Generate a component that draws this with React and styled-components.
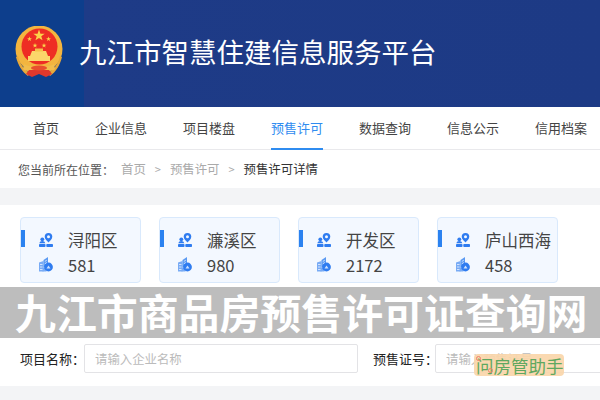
import styled, { createGlobalStyle } from "styled-components";

const GlobalStyle = createGlobalStyle`
  html, body {
    margin: 0;
    padding: 0;
    background: #f3f4f6;
    overflow: hidden;
  }
  * {
    box-sizing: border-box;
  }
`;

const Page = styled.div`
  position: relative;
  width: 600px;
  height: 400px;
  overflow: hidden;
  font-family: "Noto Sans CJK SC", "Noto Sans", sans-serif;
`;

const Header = styled.header`
  height: 107px;
  padding: 26px 0 0 15px;
  display: flex;
  align-items: flex-start;
  gap: 16px;
  background: linear-gradient(90deg, #0d3e8c 0, #0d3e8c 84px, #1e3b87 84px, #1d3a85 100%);
`;

const SiteTitle = styled.h1`
  margin: 0;
  height: 52px;
  line-height: 50px;
  font-size: 27.5px;
  font-weight: 400;
  color: #fff;
  white-space: nowrap;
`;

const Nav = styled.nav`
  height: 43px;
  padding: 0 0 0 33px;
  display: flex;
  gap: 36px;
  background: #fff;
  border-bottom: 1px solid #e9e9ec;
`;

const NavItem = styled.a`
  height: 43px;
  line-height: 41px;
  font-size: 13px;
  white-space: nowrap;
  color: ${(p) => (p.$active ? "#2f8cf0" : "#444")};
  border-bottom: 2px solid ${(p) => (p.$active ? "#2f8cf0" : "transparent")};
`;

const Breadcrumb = styled.div`
  height: 38px;
  padding: 0 0 0 18px;
  display: flex;
  align-items: center;
  font-size: 12px;
  color: #555;
  background: #fff;
`;

const Crumb = styled.span`
  color: ${(p) => (p.$current ? "#333" : "#aaa")};
  font-size: 12.4px;
  white-space: nowrap;
`;

const CrumbLead = styled.span`
  margin-right: 7px;
  white-space: nowrap;
`;

const Sep = styled.span`
  margin: 0 9px;
  color: #aaa;
  font-size: 11px;
`;

const Panel = styled.section`
  margin-top: 17px;
  height: 181px;
  padding: 12px 20px 0;
  background: #fff;
`;

const CardRow = styled.div`
  display: flex;
  gap: 18px;
`;

const Card = styled.div`
  position: relative;
  width: 121px;
  height: 66px;
  padding: 9px 0 0 18px;
  background: #f3f8ff;
  border: 1px solid #d9e9fc;
  border-radius: 4px;
`;

const CardMark = styled.i`
  position: absolute;
  left: 0;
  top: 12px;
  width: 4px;
  height: 17px;
  background: #2b82f0;
`;

const CardLine = styled.div`
  height: 25px;
  display: flex;
  align-items: center;
  gap: 14px;
  font-size: 16.5px;
  color: #444;
  white-space: nowrap;
`;

const IconSlot = styled.span`
  display: flex;
  width: 15px;
  flex: none;
`;

const SearchRow = styled.div`
  margin-top: 61px;
  display: flex;
  align-items: center;
`;

const FieldLabel = styled.label`
  font-size: 13px;
  color: #222;
  white-space: nowrap;
  margin-right: ${(p) => p.$gap}px;
`;

const TextInput = styled.input`
  flex: none;
  width: ${(p) => p.$width}px;
  height: 29px;
  padding: 0 10px;
  margin-right: 15px;
  font-family: inherit;
  font-size: 12.4px;
  background: #fff;
  border: 1px solid #e3e3e6;
  border-radius: 2px;
  &::placeholder {
    color: #bbb;
    opacity: 1;
  }
`;

const Banner = styled.div`
  position: absolute;
  left: 0;
  top: 287px;
  width: 600px;
  height: 51px;
  padding-left: 15px;
  line-height: 49px;
  font-size: 40.9px;
  font-weight: 700;
  color: #fff;
  white-space: nowrap;
  background: #bdbdbd;
`;

const Stamp = styled.div`
  position: absolute;
  left: 474px;
  top: 354px;
  width: 90px;
  height: 22px;
  display: flex;
  align-items: center;
  padding-left: 2px;
  font-size: 17.5px;
  color: #5fa860;
  background: rgba(250, 214, 170, 0.92);
  border-radius: 4px;
  white-space: nowrap;
`;

const StampDot = styled.i`
  position: absolute;
  left: ${(p) => p.$x}px;
  top: ${(p) => p.$y}px;
  width: 5px;
  height: 5px;
  border: 1px solid #f0806a;
  border-radius: 50%;
`;

const starPoints = "0,-1 .24,-.31 .95,-.31 .38,.12 .59,.81 0,.4 -.59,.81 -.38,.12 -.95,-.31 -.24,-.31";

function Star({ x, y, r }) {
  return <polygon points={starPoints} fill="#fbd24a" transform={`translate(${x} ${y}) scale(${r})`} />;
}

function Emblem() {
  return (
    <svg width="48" height="52" viewBox="0 0 48 52">
      <circle cx="24" cy="23" r="23.500" fill="#f3b53f" />
      <circle cx="24.500" cy="20.500" r="18" fill="#ee2d24" />
      <path d="M3 30c2 9 7 14 12 17l-2 3C7 46 3 39 1 31z" fill="#e8a93a" />
      <path d="M45 30c-2 9-7 14-12 17l2 3c6-4 10-11 12-19z" fill="#e8a93a" />
      <Star x={24} y={9.500} r={6} />
      <Star x={14.500} y={13} r={2.600} />
      <Star x={33.500} y={13} r={2.600} />
      <Star x={20} y={19.500} r={2.600} />
      <Star x={29} y={19.500} r={2.600} />
      <path d="M17 25h14l2 5h2v5H13v-5h2z" fill="#fbd66a" />
      <rect x="20" y="22.500" width="8" height="3" fill="#f5c04a" />
      <path d="M9 38c5 4 25 4 30 0l1 5c-3 4-29 4-32 0z" fill="#f2bd4c" />
      <path d="M14 44h20l3 4-6 3-7-3-7 3-6-3z" fill="#e0382c" />
      <ellipse cx="24" cy="42" rx="8" ry="2.500" fill="#e94f2e" />
    </svg>
  );
}

function PinIcon() {
  return (
    <svg width="14" height="14" viewBox="0 0 14 14" fill="#2f7cf0">
      <path d="M9.500 0a3.800 3.800 0 0 0-3.800 3.800c0 2.400 2.500 4.400 3.800 5.600 1.300-1.200 3.800-3.200 3.800-5.600A3.800 3.800 0 0 0 9.500 0zm0 2.300a1.500 1.500 0 1 1 0 3 1.500 1.500 0 0 1 0-3z" />
      <circle cx="3.300" cy="6.300" r="1.900" />
      <path d="M.4 10.200C.6 8.800 1.800 8 3.300 8s2.600.8 2.900 2.200z" />
      <rect x="0" y="11" width="6.500" height="3" rx=".8" />
      <rect x="7.300" y="11" width="6.700" height="3" rx=".8" />
    </svg>
  );
}

function StackIcon() {
  return (
    <svg width="14" height="15" viewBox="0 0 14 15">
      <path d="M0 5.500l4.500-1.500V14.500H0z" fill="#78abf5" />
      <path d="M4.500 3l4.500-3V7l-4.500 4z" fill="#5b9af2" />
      <rect x="3.500" y="11" width="4" height="3.500" fill="#78abf5" />
      <circle cx="9.500" cy="10" r="4.400" fill="#2f7cf0" />
      <path d="M7.500 11.500l2-3 2 3z" fill="#cfe2ff" />
      <path d="M1 7.500h2.500M1 10h2.500M1 12.500h2.500M5.800 4.500l2-1.300M5.800 6.800l2-1.300" stroke="#e8f1ff" strokeWidth=".8" />
    </svg>
  );
}

const navItems = ["首页", "企业信息", "项目楼盘", "预售许可", "数据查询", "信息公示", "信用档案"];

const districts = [
  { name: "浔阳区", count: 581 },
  { name: "濂溪区", count: 980 },
  { name: "开发区", count: 2172 },
  { name: "庐山西海", count: 458 },
];

export default function App() {
  return (
    <Page>
      <GlobalStyle />
      <Header>
        <Emblem />
        <SiteTitle>九江市智慧住建信息服务平台</SiteTitle>
      </Header>
      <Nav>
        {navItems.map((item) => (
          <NavItem key={item} $active={item === "预售许可"}>
            {item}
          </NavItem>
        ))}
      </Nav>
      <Breadcrumb>
        <CrumbLead>您当前所在位置：</CrumbLead>
        <Crumb>首页</Crumb>
        <Sep>&gt;</Sep>
        <Crumb>预售许可</Crumb>
        <Sep>&gt;</Sep>
        <Crumb $current>预售许可详情</Crumb>
      </Breadcrumb>
      <Panel>
        <CardRow>
          {districts.map((d) => (
            <Card key={d.name}>
              <CardMark />
              <CardLine>
                <IconSlot>
                  <PinIcon />
                </IconSlot>
                {d.name}
              </CardLine>
              <CardLine>
                <IconSlot>
                  <StackIcon />
                </IconSlot>
                {d.count}
              </CardLine>
            </Card>
          ))}
        </CardRow>
        <SearchRow>
          <FieldLabel $gap={-1}>项目名称：</FieldLabel>
          <TextInput $width={274} placeholder="请输入企业名称" />
          <FieldLabel $gap={-3}>预售证号：</FieldLabel>
          <TextInput $width={200} placeholder="请输入预售证号" />
        </SearchRow>
      </Panel>
      <Banner>九江市商品房预售许可证查询网</Banner>
      <Stamp>
        问房管助手
        <StampDot $x={2} $y={2} />
        <StampDot $x={14} $y={14} />
      </Stamp>
    </Page>
  );
}
